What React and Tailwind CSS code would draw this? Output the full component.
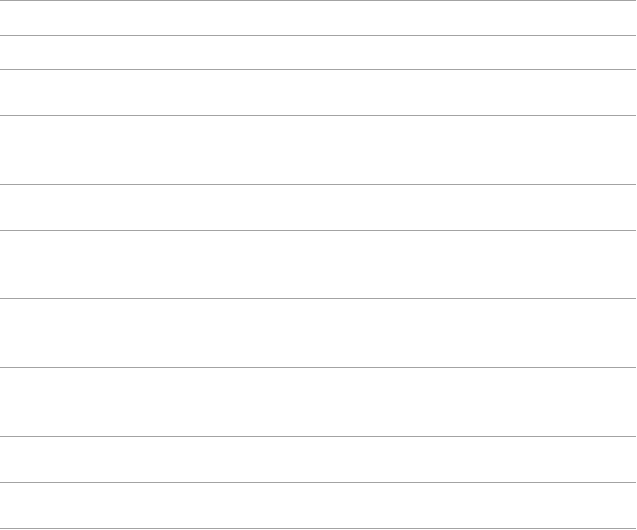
const rows = [
  'h-[34.5px]',
  'h-[34.5px]',
  'h-[46px]',
  'h-[69px]',
  'h-[46px]',
  'h-[68px]',
  'h-[69px]',
  'h-[69px]',
  'h-[46px]',
  'h-[46px]',
];

const App = () => {
  return (
    <div className="min-h-screen bg-white">
      <div className="w-[636px] border-t border-[#a3a3a3]">
        {rows.map((h, i) => (
          <div key={i} className={`${h} border-b border-[#a3a3a3]`} />
        ))}
      </div>
    </div>
  );
};

export default App;
